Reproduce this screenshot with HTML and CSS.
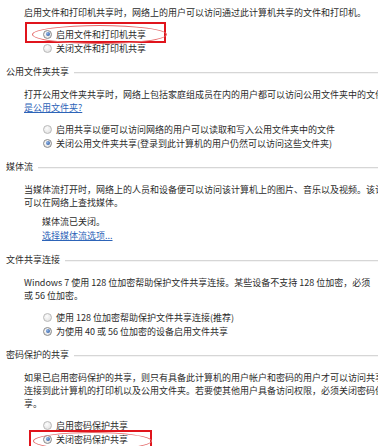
FILE: index.html
```html
<!DOCTYPE html>
<html lang="zh-CN">
<head>
    <meta charset="UTF-8">
    <title>高级共享设置</title>
    <link rel="stylesheet" href="styles.css">
</head>
<body>
    <div class="page">
        <p class="para top">启用文件和打印机共享时，网络上的用户可以访问通过此计算机共享的文件和打印机。</p>
        <div class="options first">
            <div class="radio mark-a"><span class="dot on"></span>启用文件和打印机共享</div>
            <div class="radio"><span class="dot"></span>关闭文件和打印机共享</div>
        </div>

        <div class="section-title">公用文件夹共享</div>
        <p class="para">打开公用文件夹共享时，网络上包括家庭组成员在内的用户都可以访问公用文件夹中的文件。<br><a href="#">是公用文件夹?</a></p>
        <div class="options">
            <div class="radio"><span class="dot"></span>启用共享以便可以访问网络的用户可以读取和写入公用文件夹中的文件</div>
            <div class="radio"><span class="dot on"></span>关闭公用文件夹共享(登录到此计算机的用户仍然可以访问这些文件夹)</div>
        </div>

        <div class="section-title">媒体流</div>
        <p class="para">当媒体流打开时，网络上的人员和设备便可以访问该计算机上的图片、音乐以及视频。该计<br>可以在网络上查找媒体。</p>
        <div class="status">
            <div>媒体流已关闭。</div>
            <a href="#">选择媒体流选项...</a>
        </div>

        <div class="section-title">文件共享连接</div>
        <p class="para">Windows 7 使用 128 位加密帮助保护文件共享连接。某些设备不支持 128 位加密，必须<br>或 56 位加密。</p>
        <div class="options">
            <div class="radio"><span class="dot"></span>使用 128 位加密帮助保护文件共享连接(推荐)</div>
            <div class="radio"><span class="dot on"></span>为使用 40 或 56 位加密的设备启用文件共享</div>
        </div>

        <div class="section-title">密码保护的共享</div>
        <p class="para">如果已启用密码保护的共享，则只有具备此计算机的用户帐户和密码的用户才可以访问共享<br>连接到此计算机的打印机以及公用文件夹。若要使其他用户具备访问权限，必须关闭密码保<br>享。</p>
        <div class="options">
            <div class="radio"><span class="dot"></span>启用密码保护共享</div>
            <div class="radio mark-b"><span class="dot on"></span>关闭密码保护共享</div>
        </div>
    </div>
</body>
</html>
```

FILE: styles.css
```css
body {
    margin: 0;
    background: #fff;
    color: #2b2b2b;
    font-family: "Noto Sans CJK SC", "Noto Sans", sans-serif;
    font-size: 9px;
    overflow: hidden;
}
.page {
    width: 378px;
    height: 446px;
    overflow: hidden;
    white-space: nowrap;
}
.para {
    margin: 9px 0 0;
    padding-left: 24px;
    line-height: 13px;
}
.para.top {
    margin-top: 6px;
    line-height: 14px;
}
a {
    color: #2d64b8;
    text-decoration: underline;
}
.options {
    margin-top: 8px;
    padding-left: 43px;
}
.options.first {
    margin-top: 7px;
}
.radio {
    position: relative;
    display: flex;
    align-items: center;
    height: 14px;
}
.dot {
    width: 7px;
    height: 7px;
    margin-right: 4px;
    border: 1px solid #b9b9b9;
    border-radius: 50%;
    background: radial-gradient(circle at 40% 35%, #fdfdfd, #dcdcdc);
    display: flex;
    align-items: center;
    justify-content: center;
}
.dot.on {
    border-color: #8a8a8a;
}
.dot.on::after {
    content: "";
    width: 4px;
    height: 4px;
    border-radius: 50%;
    background: radial-gradient(circle at 35% 35%, #8fb4e6, #1f4e9a);
}
.section-title {
    display: flex;
    align-items: center;
    margin-top: 10px;
    padding-left: 6px;
    line-height: 14px;
}
.section-title::after {
    content: "";
    flex: 1;
    height: 1px;
    margin-left: 5px;
    background: #d6d6d6;
    box-shadow: 0 1px 0 #f4f4f4;
}
.status {
    margin-top: 6px;
    padding-left: 42px;
    line-height: 14px;
}
/* red annotation marks drawn over the screenshot */
.mark-a::before,
.mark-a::after,
.mark-b::before,
.mark-b::after {
    content: "";
    position: absolute;
    pointer-events: none;
}
.mark-a::before {
    left: -18px;
    top: -5px;
    width: 137px;
    height: 17px;
    border: 2px solid #e0141c;
}
.mark-a::after {
    left: -11px;
    top: -2px;
    width: 133px;
    height: 17px;
    border: 1px solid #e46a6a;
    border-radius: 50%;
}
.mark-b::before {
    left: -14px;
    top: -2px;
    width: 119px;
    height: 20px;
    border: 2px solid #e0141c;
}
.mark-b::after {
    left: -10px;
    top: 0;
    width: 117px;
    height: 16px;
    border: 1px solid #e46a6a;
    border-radius: 50%;
}
```
